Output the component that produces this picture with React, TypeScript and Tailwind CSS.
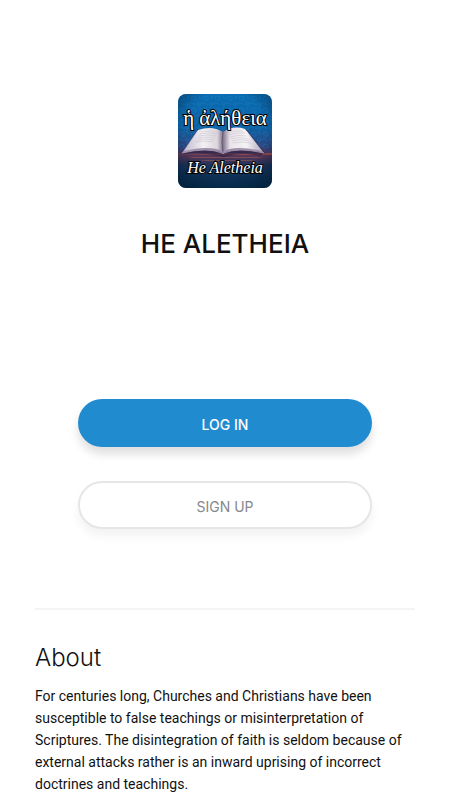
import type { ButtonHTMLAttributes } from 'react';
import clsx from 'clsx';

function Logo() {
  return (
    <svg viewBox="0 0 94 94" className="size-[94px]" role="img" aria-label="He Aletheia logo">
      <defs>
        <linearGradient id="sky" x1="0" y1="0" x2="0" y2="1">
          <stop offset="0" stopColor="#0a6db3" />
          <stop offset="0.35" stopColor="#0c62a5" />
          <stop offset="0.56" stopColor="#2c4680" />
          <stop offset="0.66" stopColor="#5a3556" />
          <stop offset="0.76" stopColor="#1c355c" />
          <stop offset="1" stopColor="#053357" />
        </linearGradient>
        <radialGradient id="vignette" cx="0.5" cy="0.4" r="0.72">
          <stop offset="0.6" stopColor="#001830" stopOpacity="0" />
          <stop offset="1" stopColor="#001830" stopOpacity="0.6" />
        </radialGradient>
        <linearGradient id="horizon" x1="0" y1="0" x2="1" y2="0">
          <stop offset="0" stopColor="#8b3c3c" stopOpacity="0.1" />
          <stop offset="0.5" stopColor="#9a5560" />
          <stop offset="1" stopColor="#a4473a" stopOpacity="0.6" />
        </linearGradient>
        <linearGradient id="pageLeft" x1="0" y1="0" x2="1" y2="0">
          <stop offset="0" stopColor="#c3bbd0" />
          <stop offset="0.5" stopColor="#f3f0f3" />
          <stop offset="0.85" stopColor="#ddd6dd" />
          <stop offset="1" stopColor="#81758c" />
        </linearGradient>
        <linearGradient id="pageRight" x1="0" y1="0" x2="1" y2="0">
          <stop offset="0" stopColor="#81758c" />
          <stop offset="0.18" stopColor="#e9e4ea" />
          <stop offset="0.6" stopColor="#f5f3f5" />
          <stop offset="1" stopColor="#b6acc2" />
        </linearGradient>
        <pattern id="swirl" width="12" height="12" patternUnits="userSpaceOnUse">
          <path
            d="M1 5c0-3 4-4 5-1s-3 3-3 1M7 11c0-3 4-3 4-1s-3 2-2 0M0 10q3-3 5 1M8 1q3 1 2 4"
            fill="none"
            stroke="#35a0dd"
            strokeWidth="0.6"
            opacity="0.3"
          />
        </pattern>
        <clipPath id="tile">
          <rect width="94" height="94" rx="8" />
        </clipPath>
      </defs>

      <g clipPath="url(#tile)">
        <rect width="94" height="94" fill="url(#sky)" />
        <rect width="94" height="54" fill="url(#swirl)" />
        <rect width="94" height="94" fill="url(#vignette)" />
        <path d="M0 59h94v2H0z" fill="url(#horizon)" />
        <path d="M10 63h76l-8 1H16zM20 66h58l-6 1H28z" fill="#a4615e" opacity="0.5" />

        {/* Open book */}
        <path d="M4 60l16-25 25 18 23-18 19 24-5 3q-18-4-32 0l-5 1-4-1q-18-4-36-2z" fill="#2c2446" opacity="0.7" />
        <path d="M4 59L19 37q14-5 26 1v21q-15-6-41 0z" fill="#9b8eae" />
        <path d="M45 59V38q12-6 24-1l17 22q-26-6-41 0z" fill="#9b8eae" />
        <path d="M6 57L20 36q14-5 25 2v19q-14-6-39 0z" fill="url(#pageLeft)" />
        <path d="M45 57V38q10-7 22-3l17 22q-25-6-39 0z" fill="url(#pageRight)" />
        <path
          d="M23 38q8-2 16 0M22 40q8-2 17 0M21 42q8-2 17 0M20 44q8-2 17 0M19 46q8-2 17 0M17 48q9-2 18 0M50 39q8-3 15-2M51 41q8-3 16-2M52 43q8-3 16-1M53 45q8-3 17 0M54 47q8-3 17 0M55 49q8-2 18 0"
          fill="none"
          stroke="#c3bcc8"
          strokeWidth="0.5"
        />
        <path d="M4 59q25-6 40 0l1 1 1-1q14-6 40 0" fill="none" stroke="#c9adb8" strokeWidth="0.7" />
        <path d="M45 38q-2 10 0 20" fill="none" stroke="#5d5168" strokeWidth="0.8" />

        <text
          x="47"
          y="31"
          textAnchor="middle"
          className="fill-white stroke-black stroke-2 font-['Liberation_Serif',serif] text-[21px] [paint-order:stroke]"
        >
          ἡ ἀλήθεια
        </text>
        <text
          x="47"
          y="79"
          textAnchor="middle"
          className="fill-white stroke-black stroke-2 font-['Liberation_Serif',serif] text-[16px] italic [paint-order:stroke]"
        >
          He Aletheia
        </text>
      </g>
    </svg>
  );
}

type PillButtonProps = ButtonHTMLAttributes<HTMLButtonElement> & {
  variant: 'primary' | 'outline';
};

function PillButton({ variant, className, ...props }: PillButtonProps) {
  return (
    <button
      type="button"
      className={clsx(
        "h-12 w-full rounded-full pt-1 font-['Inter',sans-serif] text-[14px] leading-5",
        variant === 'primary' &&
          'bg-[#218bd0] font-medium text-white shadow-[0_7px_10px_rgba(0,0,0,0.13)]',
        variant === 'outline' &&
          'border-2 border-[#e6e6e6] bg-white text-[#85888b] shadow-[0_7px_10px_rgba(0,0,0,0.05)]',
        className,
      )}
      {...props}
    />
  );
}

export default function App() {
  return (
    <main className="min-h-screen bg-white px-[35px] pt-[94px] text-[#111111]">
      <header className="flex flex-col items-center">
        <Logo />
        <h1 className="mt-10 font-['Inter',sans-serif] text-[26px] leading-8 font-medium">
          HE ALETHEIA
        </h1>
      </header>

      {/* Sign in actions */}
      <div className="mt-[139px] flex flex-col gap-[34px] px-[43px]">
        <PillButton variant="primary">LOG IN</PillButton>
        <PillButton variant="outline">SIGN UP</PillButton>
      </div>

      <hr className="mt-[79px] border-t-2 border-[#f4f4f4]" />

      <section className="pt-8">
        <h2 className="font-['Inter',sans-serif] text-[24px] leading-8 font-light">About</h2>
        <p className="mt-[11px] font-['Roboto',sans-serif] text-[14px] leading-[22px]">
          For centuries long, Churches and Christians have been susceptible to false teachings or
          misinterpretation of Scriptures. The disintegration of faith is seldom because of external
          attacks rather is an inward uprising of incorrect doctrines and teachings.
        </p>
      </section>
    </main>
  );
}
